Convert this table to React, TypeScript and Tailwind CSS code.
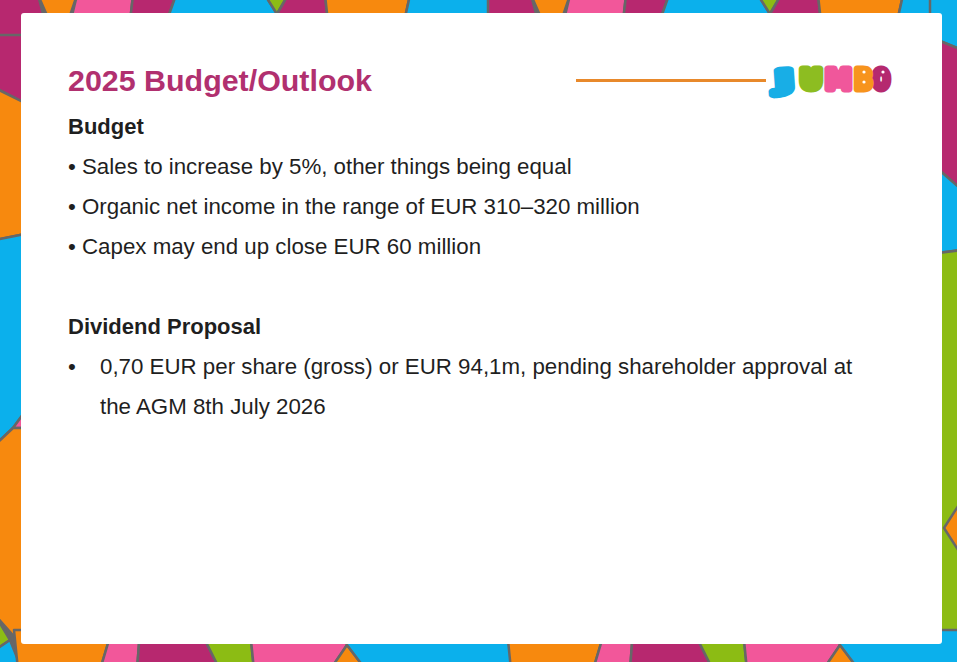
import React from "react";

type Poly = { c: string; p: string };

const MAG = "#b7286f";
const ORA = "#f7890e";
const PIN = "#f2579a";
const BLU = "#0bb0ec";
const GRN = "#8cbc14";

const topTile: Poly[] = [
  { c: MAG, p: "-5,-5 38,-5 50,40 -5,40" },
  { c: ORA, p: "38,-5 77,-5 60,45" },
  { c: PIN, p: "77,-5 133,-5 128,40 66,40" },
  { c: MAG, p: "133,-5 176,-5 160,40 128,40" },
  { c: BLU, p: "176,-5 265,-5 277,14 270,40 160,40" },
  { c: GRN, p: "265,-5 288,-5 277,14" },
  { c: MAG, p: "288,-5 325,-5 330,40 270,40 277,14" },
  { c: ORA, p: "325,-5 410,-5 400,40 330,40" },
  { c: BLU, p: "410,-5 498,-5 500,40 400,40" },
];

const bottomTile: Poly[] = [
  { c: ORA, p: "14,630 112,630 100,670 18,670" },
  { c: PIN, p: "112,630 140,630 137,670 100,670" },
  { c: MAG, p: "140,630 200,630 220,670 137,670" },
  { c: GRN, p: "200,630 250,630 254,670 220,670" },
  { c: PIN, p: "250,630 345,630 347,645 330,670 254,670" },
  { c: ORA, p: "347,645 366,670 330,670" },
  { c: BLU, p: "345,630 505,630 509,645 513,670 366,670 347,645" },
];

const sides: Poly[] = [
  { c: MAG, p: "-5,35 35,35 35,108 -5,88" },
  { c: ORA, p: "-5,88 35,108 35,232 -5,240" },
  { c: BLU, p: "-5,240 35,232 35,398 13,428 -5,445" },
  { c: PIN, p: "13,428 35,398 35,428" },
  { c: ORA, p: "-5,445 13,428 35,428 35,660 -5,615" },
  { c: GRN, p: "-5,615 10,640 -5,650" },
  { c: BLU, p: "-5,650 10,640 22,670 -5,670" },
  { c: BLU, p: "930,-5 962,-5 962,50 930,37" },
  { c: MAG, p: "930,37 962,50 962,190 930,162" },
  { c: BLU, p: "930,162 962,190 962,250 930,254" },
  { c: GRN, p: "930,254 962,250 962,645 930,640" },
  { c: ORA, p: "962,500 944,528 962,556" },
];

function Mosaic() {
  const stroke = { stroke: "#676767", strokeWidth: 2.5, strokeLinejoin: "round" as const };
  return (
    <svg className="absolute inset-0" width="957" height="662" viewBox="0 0 957 662">
      <rect x="0" y="0" width="957" height="662" fill="#676767" />
      {[0, 493].map((dx) => (
        <g key={"t" + dx} transform={`translate(${dx},0)`}>
          {topTile.map((q, i) => (
            <polygon key={i} points={q.p} fill={q.c} {...stroke} />
          ))}
        </g>
      ))}
      {sides.map((q, i) => (
        <polygon key={"s" + i} points={q.p} fill={q.c} {...stroke} />
      ))}
      {[0, 493].map((dx) => (
        <g key={"b" + dx} transform={`translate(${dx},0)`}>
          {bottomTile.map((q, i) => (
            <polygon key={i} points={q.p} fill={q.c} {...stroke} />
          ))}
        </g>
      ))}
    </svg>
  );
}

function JumboLogo() {
  const letter = (ch: string, cx: number, sx: number, color: string, rot = 0) => (
    <g transform={`translate(${cx} 30) rotate(${rot}) scale(${sx} 1)`}>
      <text
        x={0}
        y={0}
        textAnchor="middle"
        fill={color}
        stroke={color}
        strokeWidth={7}
        strokeLinejoin="round"
        strokeLinecap="round"
        fontFamily="'DejaVu Sans', sans-serif"
        fontWeight={700}
        fontSize={26}
      >
        {ch}
      </text>
    </g>
  );
  return (
    <svg width="124" height="36" viewBox="0 0 124 36" className="block overflow-visible">
      {letter("J", 16, 1.7, "#18aee6", -4)}
      {letter("U", 42, 1.05, "#8dbd21")}
      {letter("M", 69.5, 1.0, "#f0579b")}
      {letter("O", 112, 0.78, "#b5296f")}
      {letter("B", 94.5, 0.88, "#f7941d")}
      <circle cx="95" cy="13" r="1.6" fill="#fff" />
      <circle cx="95" cy="23" r="1.6" fill="#fff" />
      <circle cx="114" cy="13" r="1.6" fill="#fff" />
    </svg>
  );
}

export default function App() {
  return (
    <div className="relative w-[957px] h-[662px] overflow-hidden font-['Liberation_Sans',Arial,sans-serif]">
      <Mosaic />
      <div className="relative ml-[21px] mt-[13px] w-[921px] h-[631px] bg-white rounded-[3px] pl-[47px] pr-[49px] pt-[49px]">
        <div className="flex items-center justify-between h-[36px]">
          <h1 className="text-[30.4px] leading-[36px] font-bold text-[#b1306f]">2025 Budget/Outlook</h1>
          <div className="flex items-center">
            <div className="w-[190px] h-[3px] bg-[#e8892b]" />
            <div className="ml-[3px] mb-[6px]">
              <JumboLogo />
            </div>
          </div>
        </div>
        <div className="mt-[9px] text-[22.3px] leading-[40px] text-[#1f1f1f]">
          <div className="font-bold text-[22px]">Budget</div>
          <div>• Sales to increase by 5%, other things being equal</div>
          <div>• Organic net income in the range of EUR 310–320 million</div>
          <div>• Capex may end up close EUR 60 million</div>
          <div className="h-[40px]" />
          <div className="font-bold text-[22px]">Dividend Proposal</div>
          <div className="flex">
            <div className="w-[32px] shrink-0">•</div>
            <div className="max-w-[770px]">
              0,70 EUR per share (gross) or EUR 94,1m, pending shareholder approval at the AGM 8th July 2026
            </div>
          </div>
        </div>
      </div>
    </div>
  );
}
